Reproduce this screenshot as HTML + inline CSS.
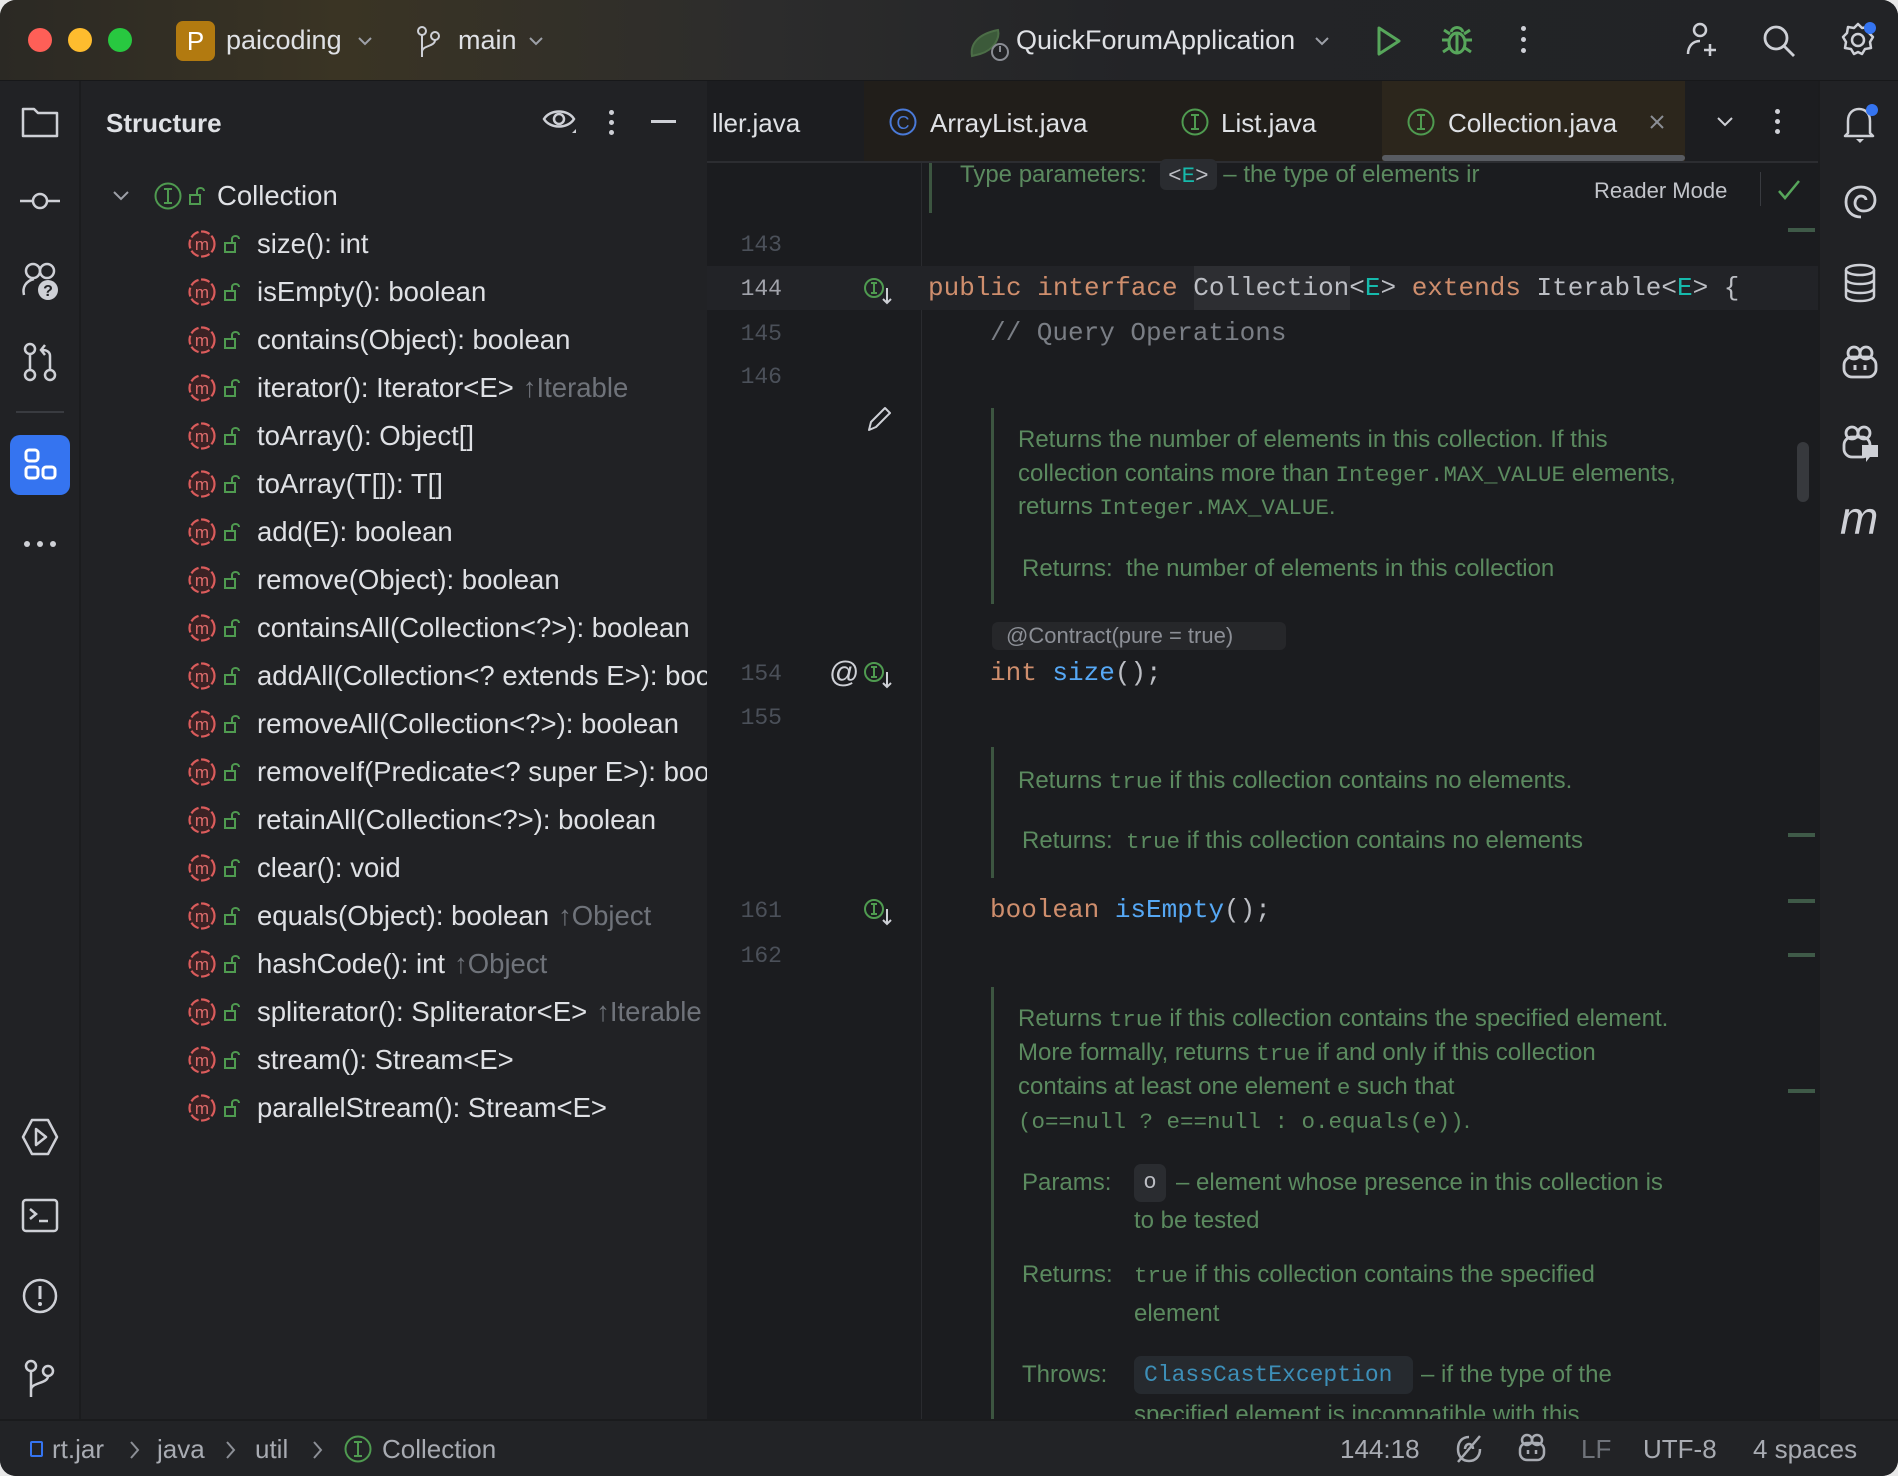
<!DOCTYPE html>
<html><head><meta charset="utf-8">
<style>
*{margin:0;padding:0;box-sizing:border-box}
html,body{width:1898px;height:1476px;background:#e8e8e8;overflow:hidden}
body{font-family:"Liberation Sans",sans-serif;position:relative}
.win{position:absolute;left:0;top:0;width:1898px;height:1476px;border-radius:16px;overflow:hidden;background:#1b1c1f}
.abs{position:absolute;white-space:nowrap}
.title{left:0;top:0;width:1898px;height:81px;background:linear-gradient(90deg,#2b2924 0%,#3a3424 18%,#2c2c2c 40%,#232427 60%,#222326 100%);border-bottom:1px solid #17181a}
.strip{left:0;top:81px;width:81px;height:1338px;background:#212225;border-right:2px solid #1b1c1e}
.panel{left:81px;top:81px;width:626px;height:1338px;background:#212225;overflow:hidden}
.rstrip{left:1818px;top:81px;width:80px;height:1338px;background:#212225;border-left:2px solid #1b1c1e}
.status{left:0;top:1419px;width:1898px;height:57px;background:#222326;border-top:2px solid #1a1b1d}
.tabs{left:707px;top:81px;width:1111px;height:82px;background:#1c1d20;border-bottom:2px solid #2c2d31}
.t{color:#dfe1e5;font-size:26px}
.list{position:absolute;left:106px;top:139px;width:600px}
.r{height:48.03px;display:flex;align-items:center;white-space:nowrap;color:#dfe1e5;font-size:27.5px}
.hint{color:#6f737a;margin-left:9px}
.ln{position:absolute;width:80px;text-align:right;left:702px;font-family:"Liberation Mono",monospace;font-size:23px;color:#4b5059}
.code{position:absolute;font-family:"Liberation Mono",monospace;font-size:26px;color:#bcbec4;white-space:pre}
.kw{color:#cf8e6d}.tp{color:#16baac}.fn{color:#56a8f5}
.doc{position:absolute;font-size:24px;color:#5b8a5f;white-space:nowrap}
.doc code{font-family:"Liberation Mono",monospace;font-size:22.5px}
.bar{position:absolute;width:3px;background:#3c5540}
.mk{position:absolute;left:1788px;width:27px;height:4px;background:#3f5a48}
</style></head><body>
<svg width="0" height="0" style="position:absolute">
<defs>
<symbol id="mi" viewBox="0 0 30 30"><circle cx="15" cy="15" r="12.5" stroke="#db5c5c" stroke-width="2.2" fill="#3a2224" stroke-dasharray="9 2.5"/><text x="15" y="21" font-size="17" text-anchor="middle" fill="#e06c6c" font-family="Liberation Sans">m</text></symbol>
<symbol id="lk" viewBox="0 0 18 20"><rect x="1" y="9" width="10" height="9" stroke="#4f9b50" stroke-width="2" fill="none"/><path d="M8 9V5c0-4 7-4 7 0" stroke="#4f9b50" stroke-width="2" fill="none"/></symbol>
</defs></svg>
<div class="win">
<div class="abs title">
  <div class="abs" style="left:28px;top:28px;width:24px;height:24px;border-radius:50%;background:#fe5f57"></div>
  <div class="abs" style="left:68px;top:28px;width:24px;height:24px;border-radius:50%;background:#febc2e"></div>
  <div class="abs" style="left:108px;top:28px;width:24px;height:24px;border-radius:50%;background:#28c840"></div>
  <div class="abs" style="left:176px;top:21px;width:39px;height:40px;border-radius:7px;background:#b27a10;color:#fff;font-size:26px;text-align:center;line-height:40px">P</div>
  <div class="abs t" style="left:226px;top:25px;font-size:27px">paicoding</div>
  <svg class="abs" style="left:356px;top:34px" width="18" height="14" viewBox="0 0 18 14"><path d="M3 4l6 6 6-6" stroke="#9da0a8" stroke-width="2" fill="none"/></svg>
  <svg class="abs" style="left:416px;top:25px" width="26" height="34" viewBox="0 0 26 34"><circle cx="6" cy="6" r="4" stroke="#ced0d6" stroke-width="2" fill="none"/><circle cx="19" cy="11" r="4" stroke="#ced0d6" stroke-width="2" fill="none"/><path d="M6 10v22M19 15c0 7-13 5-13 12" stroke="#ced0d6" stroke-width="2" fill="none"/></svg>
  <div class="abs t" style="left:458px;top:25px;font-size:27px">main</div>
  <svg class="abs" style="left:527px;top:34px" width="18" height="14" viewBox="0 0 18 14"><path d="M3 4l6 6 6-6" stroke="#9da0a8" stroke-width="2" fill="none"/></svg>
  <svg class="abs" style="left:968px;top:22px" width="44" height="40" viewBox="0 0 44 40"><path d="M4 34c-2-12 6-22 26-26 2 8-4 20-18 24z" fill="#3c5a3a" stroke="#4c6e47" stroke-width="2"/><circle cx="32" cy="30" r="8" fill="#222326" stroke="#8a8d94" stroke-width="2"/><path d="M32 24v6" stroke="#8a8d94" stroke-width="2"/></svg>
  <div class="abs t" style="left:1016px;top:25px;font-size:27px">QuickForumApplication</div>
  <svg class="abs" style="left:1313px;top:34px" width="18" height="14" viewBox="0 0 18 14"><path d="M3 4l6 6 6-6" stroke="#9da0a8" stroke-width="2" fill="none"/></svg>
  <svg class="abs" style="left:1374px;top:24px" width="30" height="34" viewBox="0 0 30 34"><path d="M5 4l20 13L5 30z" stroke="#57a65b" stroke-width="3" fill="none" stroke-linejoin="round"/></svg>
  <svg class="abs" style="left:1440px;top:22px" width="34" height="36" viewBox="0 0 34 36"><ellipse cx="17" cy="21" rx="8" ry="10" stroke="#57a65b" stroke-width="3" fill="none"/><path d="M11 10c2-6 10-6 12 0M2 18h7M25 18h7M3 30l6-4M31 30l-6-4M4 8l6 4M30 8l-6 4M17 12v18" stroke="#57a65b" stroke-width="3" fill="none"/></svg>
  <div class="abs" style="left:1521px;top:26px;width:5px;height:5px;border-radius:50%;background:#ced0d6;box-shadow:0 11px 0 #ced0d6,0 22px 0 #ced0d6"></div>
  <svg class="abs" style="left:1682px;top:20px" width="40" height="40" viewBox="0 0 40 40"><circle cx="18" cy="10" r="6" stroke="#ced0d6" stroke-width="2.5" fill="none"/><path d="M6 34c0-8 5-13 12-13M28 24v12M22 30h12" stroke="#ced0d6" stroke-width="2.5" fill="none"/></svg>
  <svg class="abs" style="left:1760px;top:22px" width="38" height="38" viewBox="0 0 38 38"><circle cx="16" cy="16" r="11" stroke="#ced0d6" stroke-width="2.8" fill="none"/><path d="M24 24l10 10" stroke="#ced0d6" stroke-width="2.8"/></svg>
  <svg class="abs" style="left:1838px;top:20px" width="40" height="40" viewBox="0 0 40 40"><path d="M20 4l4 4 6-1 1 6 4 4-3 5 1 6-6 1-3 5-4-2-4 2-3-5-6-1 1-6-3-5 4-4 1-6 6 1z" stroke="#ced0d6" stroke-width="2.5" fill="none" stroke-linejoin="round"/><circle cx="20" cy="20" r="6" stroke="#ced0d6" stroke-width="2.5" fill="none"/><circle cx="32" cy="8" r="6" fill="#3574f0"/></svg>
</div>

<div class="abs strip">
  <svg class="abs" style="left:21px;top:24px" width="38" height="34" viewBox="0 0 38 34"><path d="M2 4h11l4 4h19v23H2z" stroke="#ced0d6" stroke-width="2.5" fill="none" stroke-linejoin="round"/></svg>
  <svg class="abs" style="left:18px;top:108px" width="44" height="24" viewBox="0 0 44 24"><circle cx="22" cy="12" r="7" stroke="#ced0d6" stroke-width="2.5" fill="none"/><path d="M2 12h13M29 12h13" stroke="#ced0d6" stroke-width="2.5"/></svg>
  <svg class="abs" style="left:20px;top:180px" width="42" height="42" viewBox="0 0 42 42"><circle cx="13" cy="10" r="7" stroke="#ced0d6" stroke-width="2.5" fill="none"/><circle cx="27" cy="10" r="7" stroke="#ced0d6" stroke-width="2.5" fill="none"/><path d="M4 34c-2-8 2-14 10-16" stroke="#ced0d6" stroke-width="2.5" fill="none"/><circle cx="28" cy="29" r="10" fill="#ced0d6"/><text x="28" y="35" font-size="16" font-weight="bold" text-anchor="middle" fill="#212225" font-family="Liberation Sans">?</text></svg>
  <svg class="abs" style="left:22px;top:261px" width="36" height="40" viewBox="0 0 36 40"><circle cx="8" cy="7" r="5" stroke="#ced0d6" stroke-width="2.5" fill="none"/><circle cx="8" cy="33" r="5" stroke="#ced0d6" stroke-width="2.5" fill="none"/><circle cx="28" cy="33" r="5" stroke="#ced0d6" stroke-width="2.5" fill="none"/><path d="M8 12v16M28 28V14c0-4-3-6-8-6M23 3l-4 5 4 5" stroke="#ced0d6" stroke-width="2.5" fill="none"/></svg>
  <div class="abs" style="left:16px;top:330px;width:48px;height:2px;background:#393b40"></div>
  <div class="abs" style="left:10px;top:354px;width:60px;height:60px;border-radius:10px;background:#3574f0"></div>
  <svg class="abs" style="left:22px;top:366px" width="36" height="36" viewBox="0 0 36 36"><rect x="4" y="3" width="12" height="11" rx="3" stroke="#fff" stroke-width="3" fill="none"/><rect x="4" y="20" width="12" height="11" rx="3" stroke="#fff" stroke-width="3" fill="none"/><rect x="21" y="20" width="12" height="11" rx="3" stroke="#fff" stroke-width="3" fill="none"/></svg>
  <div class="abs" style="left:24px;top:460px;width:6px;height:6px;border-radius:50%;background:#ced0d6;box-shadow:13px 0 0 #ced0d6,26px 0 0 #ced0d6"></div>
  <svg class="abs" style="left:20px;top:1036px" width="40" height="40" viewBox="0 0 40 40"><path d="M12 3h16l9 17-9 17H12L3 20z" stroke="#ced0d6" stroke-width="2.5" fill="none" stroke-linejoin="round"/><path d="M16 12l10 8-10 8z" stroke="#ced0d6" stroke-width="2.5" fill="none" stroke-linejoin="round"/></svg>
  <svg class="abs" style="left:21px;top:1117px" width="38" height="36" viewBox="0 0 38 36"><rect x="2" y="2" width="34" height="31" rx="3" stroke="#ced0d6" stroke-width="2.5" fill="none"/><path d="M9 11l6 5-6 5M18 23h9" stroke="#ced0d6" stroke-width="2.5" fill="none"/></svg>
  <svg class="abs" style="left:21px;top:1196px" width="38" height="38" viewBox="0 0 38 38"><circle cx="19" cy="19" r="16" stroke="#ced0d6" stroke-width="2.5" fill="none"/><path d="M19 9v13" stroke="#ced0d6" stroke-width="3"/><circle cx="19" cy="27" r="2" fill="#ced0d6"/></svg>
  <svg class="abs" style="left:22px;top:1278px" width="36" height="40" viewBox="0 0 36 40"><circle cx="9" cy="7" r="5" stroke="#ced0d6" stroke-width="2.5" fill="none"/><circle cx="26" cy="12" r="5" stroke="#ced0d6" stroke-width="2.5" fill="none"/><path d="M9 12v26M26 17c0 8-17 6-17 14" stroke="#ced0d6" stroke-width="2.5" fill="none"/></svg>
</div>

<div class="abs panel">
  <div class="abs" style="left:25px;top:27px;color:#dfe1e5;font-size:26px;font-weight:bold">Structure</div>
  <svg class="abs" style="left:461px;top:24px" width="36" height="32" viewBox="0 0 36 32"><path d="M2 14C8 4 26 4 32 14 26 24 8 24 2 14z" stroke="#ced0d6" stroke-width="2.5" fill="none"/><circle cx="17" cy="14" r="5" stroke="#ced0d6" stroke-width="2.5" fill="none"/><path d="M30 28l4-4v4z" fill="#ced0d6"/></svg>
  <div class="abs" style="left:528px;top:29px;width:5px;height:5px;border-radius:50%;background:#ced0d6;box-shadow:0 10px 0 #ced0d6,0 20px 0 #ced0d6"></div>
  <div class="abs" style="left:570px;top:39px;width:25px;height:3px;background:#ced0d6"></div>

  <div class="abs" style="top:91px;left:30px;height:48px;display:flex;align-items:center;color:#dfe1e5;font-size:27.5px">
    <svg width="20" height="14" viewBox="0 0 20 14" style="margin-right:22px"><path d="M3 3l7 7 7-7" stroke="#9da0a8" stroke-width="2" fill="none"/></svg>
    <svg width="30" height="30" viewBox="0 0 30 30" style="margin-right:6px"><circle cx="15" cy="15" r="12.5" stroke="#4f9b50" stroke-width="2" fill="none"/><path d="M11 8h8M11 22h8M15 8v14" stroke="#4f9b50" stroke-width="2"/></svg>
    <svg width="18" height="20" viewBox="0 0 18 20" style="margin-right:10px"><use href="#lk"/></svg>
    <span>Collection</span>
  </div>
  <div class="list">
<div class="r"><svg width="30" height="30" style="margin-right:7px"><use href="#mi"/></svg><svg width="18" height="20" style="margin-right:15px"><use href="#lk"/></svg>size(): int</div>
<div class="r"><svg width="30" height="30" style="margin-right:7px"><use href="#mi"/></svg><svg width="18" height="20" style="margin-right:15px"><use href="#lk"/></svg>isEmpty(): boolean</div>
<div class="r"><svg width="30" height="30" style="margin-right:7px"><use href="#mi"/></svg><svg width="18" height="20" style="margin-right:15px"><use href="#lk"/></svg>contains(Object): boolean</div>
<div class="r"><svg width="30" height="30" style="margin-right:7px"><use href="#mi"/></svg><svg width="18" height="20" style="margin-right:15px"><use href="#lk"/></svg>iterator(): Iterator&lt;E&gt;<span class="hint">↑Iterable</span></div>
<div class="r"><svg width="30" height="30" style="margin-right:7px"><use href="#mi"/></svg><svg width="18" height="20" style="margin-right:15px"><use href="#lk"/></svg>toArray(): Object[]</div>
<div class="r"><svg width="30" height="30" style="margin-right:7px"><use href="#mi"/></svg><svg width="18" height="20" style="margin-right:15px"><use href="#lk"/></svg>toArray(T[]): T[]</div>
<div class="r"><svg width="30" height="30" style="margin-right:7px"><use href="#mi"/></svg><svg width="18" height="20" style="margin-right:15px"><use href="#lk"/></svg>add(E): boolean</div>
<div class="r"><svg width="30" height="30" style="margin-right:7px"><use href="#mi"/></svg><svg width="18" height="20" style="margin-right:15px"><use href="#lk"/></svg>remove(Object): boolean</div>
<div class="r"><svg width="30" height="30" style="margin-right:7px"><use href="#mi"/></svg><svg width="18" height="20" style="margin-right:15px"><use href="#lk"/></svg>containsAll(Collection&lt;?&gt;): boolean</div>
<div class="r"><svg width="30" height="30" style="margin-right:7px"><use href="#mi"/></svg><svg width="18" height="20" style="margin-right:15px"><use href="#lk"/></svg>addAll(Collection&lt;? extends E&gt;): boolean</div>
<div class="r"><svg width="30" height="30" style="margin-right:7px"><use href="#mi"/></svg><svg width="18" height="20" style="margin-right:15px"><use href="#lk"/></svg>removeAll(Collection&lt;?&gt;): boolean</div>
<div class="r"><svg width="30" height="30" style="margin-right:7px"><use href="#mi"/></svg><svg width="18" height="20" style="margin-right:15px"><use href="#lk"/></svg>removeIf(Predicate&lt;? super E&gt;): boolean</div>
<div class="r"><svg width="30" height="30" style="margin-right:7px"><use href="#mi"/></svg><svg width="18" height="20" style="margin-right:15px"><use href="#lk"/></svg>retainAll(Collection&lt;?&gt;): boolean</div>
<div class="r"><svg width="30" height="30" style="margin-right:7px"><use href="#mi"/></svg><svg width="18" height="20" style="margin-right:15px"><use href="#lk"/></svg>clear(): void</div>
<div class="r"><svg width="30" height="30" style="margin-right:7px"><use href="#mi"/></svg><svg width="18" height="20" style="margin-right:15px"><use href="#lk"/></svg>equals(Object): boolean<span class="hint">↑Object</span></div>
<div class="r"><svg width="30" height="30" style="margin-right:7px"><use href="#mi"/></svg><svg width="18" height="20" style="margin-right:15px"><use href="#lk"/></svg>hashCode(): int<span class="hint">↑Object</span></div>
<div class="r"><svg width="30" height="30" style="margin-right:7px"><use href="#mi"/></svg><svg width="18" height="20" style="margin-right:15px"><use href="#lk"/></svg>spliterator(): Spliterator&lt;E&gt;<span class="hint">↑Iterable</span></div>
<div class="r"><svg width="30" height="30" style="margin-right:7px"><use href="#mi"/></svg><svg width="18" height="20" style="margin-right:15px"><use href="#lk"/></svg>stream(): Stream&lt;E&gt;</div>
<div class="r"><svg width="30" height="30" style="margin-right:7px"><use href="#mi"/></svg><svg width="18" height="20" style="margin-right:15px"><use href="#lk"/></svg>parallelStream(): Stream&lt;E&gt;</div>
  </div>
</div>

<div class="abs tabs">
  <div class="abs" style="left:157px;top:0;height:80px;background:#211e1a;width:518px"></div>
  <div class="abs" style="left:675px;top:0;width:303px;height:80px;background:#2c261c"></div>
  <div class="abs" style="left:675px;top:74px;width:303px;height:6px;border-radius:3px;background:#585b61"></div>
  <div class="abs t" style="left:5px;top:27px">ller.java</div>
  <svg class="abs" style="left:181px;top:26px" width="30" height="30" viewBox="0 0 30 30"><circle cx="15" cy="15" r="12.5" stroke="#4a7ad8" stroke-width="2" fill="none"/><text x="15" y="22" font-size="18" text-anchor="middle" fill="#4a7ad8" font-family="Liberation Sans">C</text></svg>
  <div class="abs t" style="left:223px;top:27px">ArrayList.java</div>
  <svg class="abs" style="left:473px;top:26px" width="30" height="30" viewBox="0 0 30 30"><circle cx="15" cy="15" r="12.5" stroke="#4f9b50" stroke-width="2" fill="none"/><path d="M11 8h8M11 22h8M15 8v14" stroke="#4f9b50" stroke-width="2"/></svg>
  <div class="abs t" style="left:514px;top:27px">List.java</div>
  <svg class="abs" style="left:699px;top:26px" width="30" height="30" viewBox="0 0 30 30"><circle cx="15" cy="15" r="12.5" stroke="#4f9b50" stroke-width="2" fill="none"/><path d="M11 8h8M11 22h8M15 8v14" stroke="#4f9b50" stroke-width="2"/></svg>
  <div class="abs t" style="left:741px;top:27px">Collection.java</div>
  <svg class="abs" style="left:941px;top:32px" width="18" height="18" viewBox="0 0 18 18"><path d="M3 3l12 12M15 3L3 15" stroke="#8c8f96" stroke-width="2"/></svg>
  <svg class="abs" style="left:1008px;top:34px" width="20" height="14" viewBox="0 0 20 14"><path d="M3 3l7 7 7-7" stroke="#ced0d6" stroke-width="2" fill="none"/></svg>
  <div class="abs" style="left:1068px;top:28px;width:5px;height:5px;border-radius:50%;background:#ced0d6;box-shadow:0 10px 0 #ced0d6,0 20px 0 #ced0d6"></div>
</div>

<div class="abs" style="left:921px;top:163px;width:1px;height:1256px;background:#2a2b2f"></div>
<div class="abs" style="left:707px;top:266px;width:1111px;height:44px;background:#222327"></div>
<div class="abs" style="left:1194px;top:266px;width:156px;height:44px;background:#2d2e32"></div>

<div class="bar" style="left:929px;top:163px;height:50px"></div>
<div class="doc" style="left:960px;top:161px">Type parameters:&nbsp; <span style="background:#2a2c30;border-radius:6px;padding:2px 8px"><code style="color:#bcbec4">&lt;<span class="tp">E</span>&gt;</code></span> – the type of elements ir</div>
<div class="abs" style="left:1594px;top:178px;color:#c2c4ca;font-size:22px">Reader Mode</div>
<div class="abs" style="left:1760px;top:172px;width:1px;height:34px;background:#393b40"></div>
<svg class="abs" style="left:1776px;top:178px" width="26" height="24" viewBox="0 0 26 24"><path d="M3 13l6 7L23 3" stroke="#57a65b" stroke-width="2.5" fill="none"/></svg>

<div class="ln" style="top:232px">143</div>
<div class="ln" style="top:276px;color:#a1a3ab">144</div>
<div class="ln" style="top:321px">145</div>
<div class="ln" style="top:364px">146</div>
<div class="ln" style="top:661px">154</div>
<div class="ln" style="top:705px">155</div>
<div class="ln" style="top:898px">161</div>
<div class="ln" style="top:943px">162</div>

<svg class="abs" style="left:862px;top:276px" width="34" height="30" viewBox="0 0 34 30"><circle cx="12" cy="12" r="9" stroke="#4f9b50" stroke-width="2" fill="none"/><path d="M9 7h6M9 17h6M12 7v10" stroke="#4f9b50" stroke-width="2"/><path d="M25 12v15M21 23l4 4 4-4" stroke="#ced0d6" stroke-width="2" fill="none"/></svg>
<svg class="abs" style="left:864px;top:404px" width="30" height="30" viewBox="0 0 30 30"><path d="M5 26l2-8L21 4l5 5-14 14z" stroke="#ced0d6" stroke-width="2" fill="none" stroke-linejoin="round"/></svg>
<div class="abs" style="left:829px;top:656px;color:#ced0d6;font-size:30px">@</div>
<svg class="abs" style="left:862px;top:660px" width="34" height="30" viewBox="0 0 34 30"><circle cx="12" cy="12" r="9" stroke="#4f9b50" stroke-width="2" fill="none"/><path d="M9 7h6M9 17h6M12 7v10" stroke="#4f9b50" stroke-width="2"/><path d="M25 12v15M21 23l4 4 4-4" stroke="#ced0d6" stroke-width="2" fill="none"/></svg>
<svg class="abs" style="left:862px;top:897px" width="34" height="30" viewBox="0 0 34 30"><circle cx="12" cy="12" r="9" stroke="#4f9b50" stroke-width="2" fill="none"/><path d="M9 7h6M9 17h6M12 7v10" stroke="#4f9b50" stroke-width="2"/><path d="M25 12v15M21 23l4 4 4-4" stroke="#ced0d6" stroke-width="2" fill="none"/></svg>

<div class="code" style="left:928px;top:273px"><span class="kw">public interface</span> Collection&lt;<span class="tp">E</span>&gt; <span class="kw">extends</span> Iterable&lt;<span class="tp">E</span>&gt; {</div>
<div class="code" style="left:990px;top:318px;color:#7a7e85">// Query Operations</div>

<div class="bar" style="left:991px;top:408px;height:196px"></div>
<div class="doc" style="left:1018px;top:426px">Returns the number of elements in this collection. If this</div>
<div class="doc" style="left:1018px;top:460px">collection contains more than <code>Integer.MAX_VALUE</code> elements,</div>
<div class="doc" style="left:1018px;top:493px">returns <code>Integer.MAX_VALUE</code>.</div>
<div class="doc" style="left:1022px;top:555px">Returns:&nbsp; the number of elements in this collection</div>

<div class="abs" style="left:992px;top:622px;width:294px;height:28px;border-radius:6px;background:#26272a;color:#8c8f96;font-size:22px;padding:1px 0 0 14px">@Contract(pure = true)</div>
<div class="code" style="left:990px;top:658px"><span class="kw">int</span> <span class="fn">size</span>();</div>

<div class="bar" style="left:991px;top:747px;height:131px"></div>
<div class="doc" style="left:1018px;top:767px">Returns <code>true</code> if this collection contains no elements.</div>
<div class="doc" style="left:1022px;top:827px">Returns:&nbsp; <code>true</code> if this collection contains no elements</div>

<div class="code" style="left:990px;top:895px"><span class="kw">boolean</span> <span class="fn">isEmpty</span>();</div>

<div class="bar" style="left:991px;top:987px;height:432px"></div>
<div class="doc" style="left:1018px;top:1005px">Returns <code>true</code> if this collection contains the specified element.</div>
<div class="doc" style="left:1018px;top:1039px">More formally, returns <code>true</code> if and only if this collection</div>
<div class="doc" style="left:1018px;top:1073px">contains at least one element <code>e</code> such that</div>
<div class="doc" style="left:1018px;top:1107px"><code>(o==null&nbsp;?&nbsp;e==null&nbsp;:&nbsp;o.equals(e))</code>.</div>
<div class="doc" style="left:1022px;top:1169px">Params:</div>
<div class="abs" style="left:1134px;top:1164px;width:32px;height:38px;border-radius:7px;background:#2a2c30;color:#bcbec4;font-family:'Liberation Mono',monospace;font-size:22px;text-align:center;line-height:38px">o</div>
<div class="doc" style="left:1176px;top:1169px">– element whose presence in this collection is</div>
<div class="doc" style="left:1134px;top:1207px">to be tested</div>
<div class="doc" style="left:1022px;top:1261px">Returns:</div>
<div class="doc" style="left:1134px;top:1261px"><code>true</code> if this collection contains the specified</div>
<div class="doc" style="left:1134px;top:1300px">element</div>
<div class="doc" style="left:1022px;top:1361px">Throws:</div>
<div class="abs" style="left:1134px;top:1356px;width:279px;height:38px;border-radius:7px;background:#262a2f;color:#3d8fb8;font-family:'Liberation Mono',monospace;font-size:23px;padding-left:10px;line-height:38px">ClassCastException</div>
<div class="doc" style="left:1421px;top:1361px">– if the type of the</div>
<div class="doc" style="left:1134px;top:1401px">specified element is incompatible with this</div>

<div class="mk" style="top:228px"></div>
<div class="mk" style="top:833px"></div>
<div class="mk" style="top:899px"></div>
<div class="mk" style="top:953px"></div>
<div class="mk" style="top:1089px"></div>
<div class="abs" style="left:1797px;top:442px;width:12px;height:60px;border-radius:6px;background:#37393d"></div>

<div class="abs rstrip">
  <svg class="abs" style="left:20px;top:22px" width="42" height="42" viewBox="0 0 42 42"><path d="M8 30V18c0-8 5-12 11-12s11 4 11 12v12l3 3H5z" stroke="#ced0d6" stroke-width="2.5" fill="none" stroke-linejoin="round"/><path d="M16 36h8l-4 4z" fill="#ced0d6"/><circle cx="32" cy="7" r="6" fill="#3574f0"/></svg>
  <svg class="abs" style="left:22px;top:102px" width="38" height="38" viewBox="0 0 38 38"><path d="M19 34c-9 0-15-6-15-15S10 4 19 4s14 6 14 13-5 11-11 11-9-4-9-8 3-7 6-7 5 2 5 4" stroke="#ced0d6" stroke-width="2.8" fill="none"/></svg>
  <svg class="abs" style="left:22px;top:181px" width="36" height="42" viewBox="0 0 36 42"><ellipse cx="18" cy="8" rx="14" ry="5" stroke="#ced0d6" stroke-width="2.5" fill="none"/><path d="M4 8v26c0 3 6 5 14 5s14-2 14-5V8M4 17c0 3 6 5 14 5s14-2 14-5M4 26c0 3 6 5 14 5s14-2 14-5" stroke="#ced0d6" stroke-width="2.5" fill="none"/></svg>
  <svg class="abs" style="left:20px;top:262px" width="40" height="40" viewBox="0 0 40 40"><rect x="4" y="14" width="32" height="20" rx="8" stroke="#ced0d6" stroke-width="2.8" fill="none"/><circle cx="14" cy="10" r="6" stroke="#ced0d6" stroke-width="2.8" fill="none"/><circle cx="26" cy="10" r="6" stroke="#ced0d6" stroke-width="2.8" fill="none"/><path d="M15 22v5M25 22v5" stroke="#ced0d6" stroke-width="3"/></svg>
  <svg class="abs" style="left:20px;top:342px" width="40" height="42" viewBox="0 0 40 42"><rect x="4" y="14" width="26" height="20" rx="8" stroke="#ced0d6" stroke-width="2.8" fill="none"/><circle cx="12" cy="10" r="6" stroke="#ced0d6" stroke-width="2.8" fill="none"/><circle cx="24" cy="10" r="6" stroke="#ced0d6" stroke-width="2.8" fill="none"/><path d="M22 22h16v12h-8l-4 5v-5h-4z" fill="#ced0d6"/></svg>
  <div class="abs" style="left:20px;top:410px;color:#ced0d6;font-size:46px;font-style:italic">m</div>
</div>

<div class="abs status">
  <div class="abs" style="left:30px;top:20px;width:13px;height:16px;border:2px solid #3574f0;border-radius:2px"></div>
  <div class="abs" style="left:52px;top:13px;color:#a8abb2;font-size:26px">rt.jar</div>
  <svg class="abs" style="left:128px;top:18px" width="14" height="22" viewBox="0 0 14 22"><path d="M3 3l7 8-7 8" stroke="#8c8f96" stroke-width="2" fill="none"/></svg>
  <div class="abs" style="left:157px;top:13px;color:#a8abb2;font-size:26px">java</div>
  <svg class="abs" style="left:224px;top:18px" width="14" height="22" viewBox="0 0 14 22"><path d="M3 3l7 8-7 8" stroke="#8c8f96" stroke-width="2" fill="none"/></svg>
  <div class="abs" style="left:255px;top:13px;color:#a8abb2;font-size:26px">util</div>
  <svg class="abs" style="left:311px;top:18px" width="14" height="22" viewBox="0 0 14 22"><path d="M3 3l7 8-7 8" stroke="#8c8f96" stroke-width="2" fill="none"/></svg>
  <svg class="abs" style="left:343px;top:13px" width="30" height="30" viewBox="0 0 30 30"><circle cx="15" cy="15" r="12.5" stroke="#4f9b50" stroke-width="2" fill="none"/><path d="M11 8h8M11 22h8M15 8v14" stroke="#4f9b50" stroke-width="2"/></svg>
  <div class="abs" style="left:382px;top:13px;color:#a8abb2;font-size:26px">Collection</div>
  <div class="abs" style="left:1340px;top:13px;color:#a8abb2;font-size:26px">144:18</div>
  <svg class="abs" style="left:1454px;top:12px" width="30" height="32" viewBox="0 0 30 32"><path d="M15 4C8 4 4 9 4 16s4 12 11 12 11-5 11-12M11 16c0-3 2-5 4-5s4 2 4 5M4 29L26 3" stroke="#a8abb2" stroke-width="2.5" fill="none"/></svg>
  <svg class="abs" style="left:1516px;top:11px" width="32" height="32" viewBox="0 0 32 32"><rect x="4" y="11" width="24" height="17" rx="7" stroke="#a8abb2" stroke-width="2.5" fill="none"/><circle cx="11" cy="8" r="5" stroke="#a8abb2" stroke-width="2.5" fill="none"/><circle cx="21" cy="8" r="5" stroke="#a8abb2" stroke-width="2.5" fill="none"/><path d="M12 18v4M20 18v4" stroke="#a8abb2" stroke-width="2.5"/></svg>
  <div class="abs" style="left:1581px;top:13px;color:#6f737a;font-size:26px">LF</div>
  <div class="abs" style="left:1643px;top:13px;color:#a8abb2;font-size:26px">UTF-8</div>
  <div class="abs" style="left:1753px;top:13px;color:#a8abb2;font-size:26px">4 spaces</div>
</div>
</div>
</body></html>
